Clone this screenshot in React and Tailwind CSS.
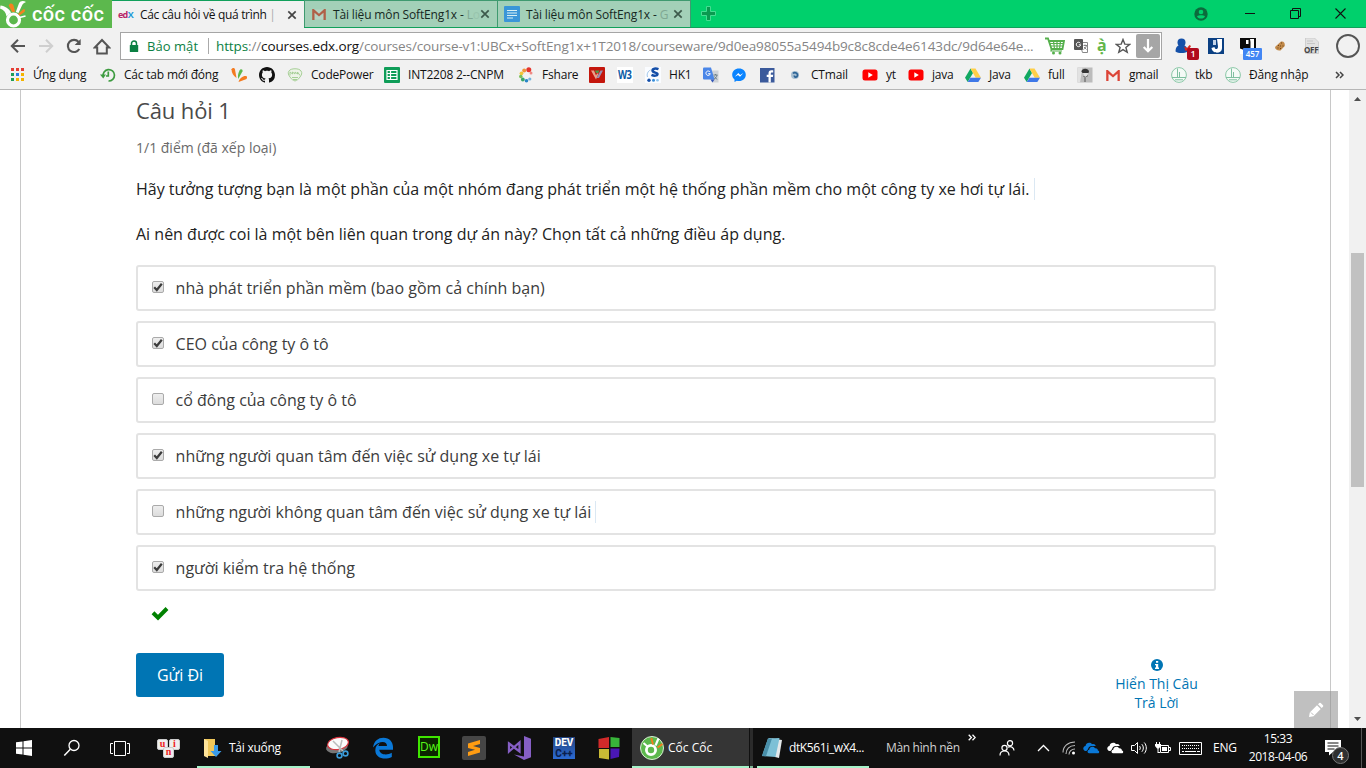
import React from "react";

const ui = "font-['Open_Sans','Noto_Sans',sans-serif]";

function Svg({ w = 16, h = 16, vb, children }) {
  return (
    <svg width={w} height={h} viewBox={vb || `0 0 ${w} ${h}`} className="block shrink-0" fill="none">
      {children}
    </svg>
  );
}

/* ---------- shared glyphs ---------- */

function CocCocMark() {
  return (
    <Svg w={28} h={28}>
      <circle cx="13.500" cy="20" r="6" stroke="#fff" strokeWidth="3.200" fill="#5cb84d" />
      <path d="M.5 5.500c4.500.5 8.500 3 10.500 7l-4.500 4C6 12.500 4 10 0 8.500z" fill="#fff" />
      <path d="M9.800 3.700c1.800-.9 3.500.2 3.800 2l1.500 6-3 .3L8.700 5.500z" fill="#f58220" />
      <path d="m15.800 12 3.200-8.800C20.200.800 23.500.5 26 2c-2 .8-3.500 2-4 3.500L18.500 13z" fill="#fff" />
      <path d="m18 14 5-4.500c.8-.6 2.100-.1 2 1-.1.900-.6 1.500-1.300 1.900L19.500 15.500z" fill="#f58220" />
      <path d="m19.500 17.500 6-1.500" stroke="#fff" strokeWidth="1.800" />
    </Svg>
  );
}

function Gmail({ faded }) {
  return (
    <Svg>
      <path d="M2 3.500h12v10H2z" fill={faded ? "#b5d3c3" : "#f4eeee"} />
      <path d="M1.200 14V3h1.600L8 7.800 13.200 3h1.600v11h-2.300V6.800L8 10.600 3.500 6.800V14z" fill={faded ? "#b06048" : "#dc4437"} />
    </Svg>
  );
}

function CloseX({ color = "#555" }) {
  return (
    <Svg w={10} h={10}>
      <path d="m1.300 1.300 7.400 7.400M8.700 1.300 1.300 8.700" stroke={color} strokeWidth="1.700" />
    </Svg>
  );
}

/* ---------- title bar ---------- */

function TitleBar() {
  return (
    <div className="flex h-7 border-b border-[#11a05b] bg-[#00d06c]">
      <div className="relative flex h-[28px] w-[112px] shrink-0 overflow-hidden bg-[#5cb84d]">
        <CocCocMark />
        <span className="ml-[4px] mt-[1px] whitespace-nowrap font-['Roboto','Open_Sans',sans-serif] text-[20px] font-medium leading-[26px] tracking-[0.400px] text-white">
          cốc cốc
        </span>
      </div>
      <div className="flex h-[28px] w-[192px] shrink-0 items-center border-t border-[#11a05b] bg-[#f1f1f1] pl-[6px]">
        <span className="w-[16px] font-['Open_Sans'] text-[9px] font-bold leading-3 tracking-[-0.700px] text-[#b72667]">
          ed<span className="text-[#1f9bd8]">X</span>
        </span>
        <span className="ml-[6px] w-[140px] whitespace-nowrap text-[12px] leading-5 tracking-[-0.310px] text-[#111]">
          Các câu hỏi về quá trình <span className="text-[#aaa]">|</span>
        </span>
        <span className="ml-[7px]"><CloseX color="#444" /></span>
      </div>
      <div className="flex h-[27px] w-[193px] shrink-0 items-center border-l border-t border-[#3f9a70] bg-[#a3d0b8] pl-[6px]">
        <Gmail faded />
        <span className="ml-[6px] mt-[1px] w-[147px] whitespace-nowrap text-[12px] leading-5 tracking-[-0.150px] text-[#16281f]">
          Tài liệu môn SoftEng1x - <span className="text-[#7fa893]">L</span><span className="text-[#98c4ad]">o</span>
        </span>
        <CloseX color="#3d5a4b" />
      </div>
      <div className="flex h-[27px] w-[194px] shrink-0 items-center border-x border-t border-[#3f9a70] bg-[#a3d0b8] pl-[6px]">
        <Svg>
          <rect width="16" height="16" rx="1" fill="#3a96d8" />
          <path d="M3 4.500h10M3 7h10M3 9.500h10M3 12h6" stroke="#d8f0f4" strokeWidth="1.100" />
        </Svg>
        <span className="ml-[6px] mt-[1px] w-[147px] whitespace-nowrap text-[12px] leading-5 tracking-[-0.150px] text-[#16281f]">
          Tài liệu môn SoftEng1x - <span className="text-[#7fa893]">G</span>
        </span>
        <CloseX color="#3d5a4b" />
      </div>
      <div className="flex flex-1 items-center pl-[10px]">
        <Svg w={15} h={15}>
          <path d="M5.500.500h4v5h5v4h-5v5h-4v-5h-5v-4h5z" fill="#0a9a50" stroke="#45dd92" strokeWidth="1" />
        </Svg>
      </div>
      <div className="flex w-[172px] shrink-0 items-center">
        <Svg w={14} h={14}>
          <circle cx="7" cy="7" r="6.700" fill="#0b6b3c" />
          <circle cx="7" cy="5" r="2.300" fill="#00d06c" />
          <path d="M3 9.200c2-1.200 6-1.200 8 0-.8 3.200-7.200 3.200-8 0" fill="#00d06c" />
        </Svg>
        <div className="ml-[37px]"><Svg w={10} h={11}><path d="M0 5.500h10" stroke="#111" /></Svg></div>
        <div className="ml-[35px]">
          <Svg w={11} h={11}><path d="M.5 2.500h8v8h-8zM2.500 2.500v-2h8v8h-2" stroke="#111" /></Svg>
        </div>
        <div className="ml-[34px]"><Svg w={11} h={11}><path d="m.5.500 10 10m0-10-10 10" stroke="#111" strokeWidth="1.100" /></Svg></div>
      </div>
    </div>
  );
}

/* ---------- address bar ---------- */

function Toolbar() {
  return (
    <div className="flex h-[34px] items-center pt-[2px]">
      <div className="flex w-[120px] shrink-0 items-center pl-[10px]">
        <Svg w={16}><path d="M15 8H2.500M8 1.800 1.800 8 8 14.200" stroke="#555" strokeWidth="2" /></Svg>
        <div className="ml-[12px]"><Svg w={16}><path d="M1 8h12.500M8 1.800 14.200 8 8 14.200" stroke="#cfcfcf" strokeWidth="2" /></Svg></div>
        <div className="ml-[12px]">
          <Svg w={16}>
            <path d="M13.300 11A6.100 6.100 0 1 1 12.600 3.900" stroke="#555" strokeWidth="2.100" />
            <path d="M14.700 1v6H8.700z" fill="#555" />
          </Svg>
        </div>
        <div className="ml-[11px]">
          <Svg w={18} h={17}><path d="M1.800 9.500 9 2l7.200 7.500h-2.400V15.500H4.200V9.500z" stroke="#555" strokeWidth="2" /></Svg>
        </div>
      </div>
      <div className="flex h-[28px] w-[1042px] shrink-0 items-center border border-[#a5a5a5] bg-white">
        <div className="ml-[8px]">
          <Svg w={10} h={13}>
            <rect x=".8" y="5" width="8.400" height="7" rx=".5" fill="#0b8043" />
            <path d="M2.500 5V3.500a2.500 2.500 0 0 1 5 0V5" stroke="#0b8043" strokeWidth="1.500" />
          </Svg>
        </div>
        <span className="ml-[8px] w-[61px] whitespace-nowrap text-[13px] leading-6 tracking-[0.050px] text-[#0b8043]">Bảo mật</span>
        <span className="h-[16px] w-px bg-[#aaa]" />
        <span className="ml-[7px] w-[829px] shrink-0 whitespace-nowrap text-[13.500px] leading-6 tracking-[-0.122px] text-[#858585]">
          <span className="text-[#0b8043]">https</span>://<span className="text-[#111]">courses.edx.org</span>
          /courses/course-v1:UBCx+SoftEng1x+1T2018/courseware/9d0ea98055a5494b9c8c8cde4e6143dc/9d64e64e...
        </span>
        <Svg w={20} h={18}>
          <path d="M0 1.500h3L6.500 12h11L19 4H4.500" stroke="#55b04c" strokeWidth="1.800" />
          <path d="M5 6.500h13M6 9h12M8.500 4l1 8M12 4v8M15.500 4l-1 8M6.500 12l-.5 2h11" stroke="#55b04c" strokeWidth="1.200" />
          <circle cx="8.500" cy="16" r="1.500" fill="#55b04c" /><circle cx="15" cy="16" r="1.500" fill="#55b04c" />
        </Svg>
        <div className="ml-[8px]">
          <Svg w={16}>
            <path d="M6.500 4.500h8v10h-5z" stroke="#888" fill="#fff" />
            <rect x="1" y="1" width="9" height="11" rx="1" fill="#555" />
            <path d="M7.400 5.300a2.200 2.200 0 1 0 .3 1.500H5.800" stroke="#fff" strokeWidth="1" />
            <path d="M10.500 7.500h3.500M12 6.500v1M13.500 7.500c-.5 2-1.500 3-3 4M11 9l2.500 2.500" stroke="#777" strokeWidth=".9" />
          </Svg>
        </div>
        <span className="ml-[8px] w-[10px] pb-[3px] font-['Noto_Sans',sans-serif] text-[16px] font-bold leading-5 text-[#62b64a]">ạ̀</span>
        <div className="ml-[8px]">
          <Svg w={16}><path d="m8 1.500 1.800 4.600 4.900.3-3.800 3.100 1.300 4.800L8 11.600l-4.200 2.700 1.300-4.800L1.300 6.400l4.900-.3z" stroke="#555" strokeWidth="1.400" /></Svg>
        </div>
        <div className="ml-[5px] flex h-[24px] w-[24px] shrink-0 items-center justify-center rounded-[2px] bg-[#a6a6a6]">
          <Svg w={14} h={16}><path d="M7 1v12M2.700 9 7 13.300 11.300 9" stroke="#fff" strokeWidth="2.200" /></Svg>
        </div>
      </div>
      <div className="ml-[13px] flex items-center">
        <div className="relative w-[33px]">
          <Svg w={18} h={18}>
            <circle cx="6.500" cy="5.500" r="4" fill="#1450a8" />
            <path d="M.5 14.500c0-5 3-7 6-7s6 2 6 7c-3 2-9 2-12 0" fill="#1450a8" />
            <path d="m9 9.500 3 1.500 2.500-3 1.500 1-2 3.500-3.500 1.500z" fill="#d5281e" />
          </Svg>
          <span className="absolute left-[12px] top-[11px] h-[12px] w-[12px] rounded-[2px] bg-[#b00b1e] text-center text-[9px] font-semibold leading-[12px] text-white">1</span>
        </div>
        <div className="w-[32px]">
          <Svg>
            <rect width="16" height="16" fill="#0b4083" />
            <path d="M9 1h5v9c0 6.500-10 6-10.500 0l3-1c.3 3 3.500 2.800 3.500-.5z" fill="#fff" />
            <path d="M5 2h3v5H5z" fill="#c3d3e8" />
          </Svg>
        </div>
        <div className="relative w-[34px]">
          <Svg>
            <rect width="16" height="16" fill="#0a0a0a" />
            <path d="M10 1h4v10h-3.500V4zM6 2h2.500v4H6zM0 10.500l4 1.500v4H0z" fill="#fff" />
          </Svg>
          <span className="absolute left-[3px] top-[10px] h-[12px] w-[19px] rounded-[1px] bg-[#4286f4] text-center text-[8px] font-semibold leading-[12px] text-white">457</span>
        </div>
        <div className="w-[30px]">
          <Svg w={12} h={12}>
            <path d="M1 7 7 1.500c3-.5 4 1.500 3.800 4.500L6.500 10.500C3.500 11 1 9.500 1 7" fill="#c28a4a" />
            <path d="M4 5.500h1M7 3h1M6 6h1M8.500 6h1M6 8.500h1M3.500 8h1" stroke="#6e431b" strokeWidth="1.100" />
          </Svg>
        </div>
        <div className="relative w-[32px]">
          <Svg>
            <path d="M1.500 0h9l4 4v11.500h-13z" fill="#e2e2e2" stroke="#c4c4c4" strokeWidth=".7" />
            <path d="M3 3h6M3 5.500h8M3 14.300h8" stroke="#c6c6c6" />
          </Svg>
          <span className="absolute left-0 top-[8px] text-[8px] font-bold leading-[8px] tracking-[-0.300px] text-[#444]">OFF</span>
        </div>
        <Svg w={24} h={24}><circle cx="12" cy="12" r="11" stroke="#555" strokeWidth="1.900" /></Svg>
      </div>
    </div>
  );
}

/* ---------- bookmarks ---------- */

const Youtube = () => (
  <Svg><rect x=".5" y="2.500" width="15" height="11" rx="2.500" fill="#f00" /><path d="m6.300 5.300 4.500 2.700-4.500 2.700z" fill="#fff" /></Svg>
);
const Drive = () => (
  <Svg>
    <path d="M5.500 1.500 0 10.700 2.700 15 8 6z" fill="#11a861" />
    <path d="M5.500 1.500h5L16 10.700h-5.300z" fill="#ffcf48" />
    <path d="M5.400 10.700H16L13.300 15H2.700z" fill="#3f78e8" />
  </Svg>
);
const Campus = () => (
  <Svg>
    <circle cx="8" cy="8" r="7.400" stroke="#8cc8a8" fill="#f4faf6" />
    <path d="M6.500 1.500v9M8.500 5v5.500M1 10.500h14M4 12.800h8" stroke="#7fc0a0" strokeWidth="1" />
  </Svg>
);

const GITHUB =
  "M8 0C3.580 0 0 3.580 0 8c0 3.540 2.290 6.530 5.470 7.590.4.070.55-.17.55-.38 0-.19-.01-.82-.01-1.490-2.010.37-2.530-.49-2.690-.94-.09-.23-.48-.94-.82-1.130-.28-.15-.68-.52-.01-.53.63-.01 1.080.58 1.230.82.72 1.210 1.870.87 2.330.66.070-.52.28-.87.51-1.070-1.780-.2-3.640-.89-3.640-3.950 0-.87.31-1.590.82-2.150-.08-.2-.36-1.020.08-2.120 0 0 .67-.21 2.200.82.64-.18 1.320-.27 2-.27s1.360.09 2 .27c1.530-1.040 2.200-.82 2.200-.82.44 1.100.16 1.920.08 2.120.51.56.82 1.270.82 2.150 0 3.070-1.870 3.750-3.650 3.950.29.25.54.73.54 1.480 0 1.070-.01 1.930-.01 2.200 0 .21.15.46.55.38A8.010 8.010 0 0 0 16 8c0-4.420-3.580-8-8-8";

const bookmarks = [
  {
    w: "w-[91px]", label: "Ứng dụng",
    icon: (
      <Svg>
        {["#e53e35", "#e53e35", "#e53e35", "#1f9e58", "#2a7de1", "#f4b400", "#1f9e58", "#f4b400", "#f4b400"].map((c, i) => (
          <rect key={i} x={2 + (i % 3) * 5} y={1 + Math.floor(i / 3) * 5} width="3" height="3" fill={c} />
        ))}
      </Svg>
    ),
  },
  {
    w: "w-[131px]", label: "Các tab mới đóng",
    icon: (
      <Svg>
        <path d="M3.200 9.500A5.700 5.700 0 1 1 8.500 14M8.300 4.500V9H6" stroke="#3d9b40" strokeWidth="1.700" />
        <path d="M0 7.500h6L3.200 11.500z" fill="#3d9b40" />
      </Svg>
    ),
  },
  {
    w: "w-[28px]",
    icon: (
      <Svg>
        <path d="M.5 2.200C1.500.5 3.500.8 4 2.500L5.500 11C2.500 9 .5 6 .5 2.200" fill="#f47b20" />
        <path d="M8.500 3.500c1-2 3.500-1.500 3 .7L7.300 12C6.500 9 7 6.500 8.500 3.500" fill="#5cb84d" />
        <path d="M14.500 9c2 0 2 2.500.5 3.200L7.500 15c1-3.500 4-6 7-6" fill="#f47b20" />
      </Svg>
    ),
  },
  { w: "w-[28px]", icon: <Svg><path d={GITHUB} fill="#111" /></Svg> },
  {
    w: "w-[97px]", label: "CodePower",
    icon: (
      <Svg>
        <path d="M2 4c1.500-3 10.500-3 12 0 1.500 2 .5 4-1 6-2 3-3 3-5 4-2-1-3-1-5-4C1.500 8 .5 6 2 4" stroke="#a6cf96" fill="#edf3e8" />
        <path d="M3 8.500V5l2.500 2V5l2.500 2V5l2.500 2V5L13 8.500M5 10.500h6M6 12.500h4" stroke="#a6cf96" />
      </Svg>
    ),
  },
  {
    w: "w-[134px]", label: "INT2208 2--CNPM",
    icon: (
      <Svg>
        <rect width="16" height="16" rx="1" fill="#0f9d58" />
        <path d="M3 3.500h10v9H3zM3 6.500h10M3 9.500h10M6.500 3.500v9" stroke="#fff" strokeWidth="1.200" />
      </Svg>
    ),
  },
  {
    w: "w-[71px]", label: "Fshare",
    icon: (
      <Svg>
        <circle cx="10.800" cy="2.800" r="2.500" fill="#e5352d" /><circle cx="6.200" cy="3.500" r="2" fill="#f0933a" />
        <circle cx="3.500" cy="6.300" r="1.900" fill="#f0c63a" /><circle cx="2.800" cy="9.500" r="1.800" fill="#7bbf5a" />
        <circle cx="4.800" cy="12.500" r="1.900" fill="#3aa66c" /><circle cx="8.500" cy="13.700" r="1.800" fill="#2a86c8" />
        <circle cx="11.800" cy="12" r="1.600" fill="#74b4dc" /><circle cx="13" cy="6" r="1.500" fill="#ef8a85" />
      </Svg>
    ),
  },
  {
    w: "w-[28px]",
    icon: (
      <Svg>
        <rect width="16" height="16" rx="1" fill="#c4160c" />
        <path d="M2 3.500h3l2 5 1-2h1.500L7 12.500z" fill="#e8a08a" />
        <path d="M6 3.500h4.500L9.300 6H7z" fill="#4f9a4a" /><path d="M11.500 3.500H14L10 11H7.500z" fill="#9a8fb0" />
      </Svg>
    ),
  },
  {
    w: "w-[28px]",
    icon: (
      <span className="flex h-4 w-4 shrink-0 items-center justify-center bg-white text-[12px] font-bold leading-4 tracking-[-0.500px] text-[#0b5ba5]">
        <span className="scale-x-[0.78]">W3</span>
      </span>
    ),
  },
  {
    w: "w-[58px]", label: "HK1",
    icon: (
      <Svg>
        <rect width="16" height="16" fill="#fafcff" />
        <path d="M13.500 2.200c-3-1.200-6-.6-6 1.400 0 2.500 5 1.500 5 3.500 0 1.800-3.500 2-6 .8" stroke="#154fa8" strokeWidth="2.500" />
        <path d="M5.500 3C3 4 1.500 7 2.500 10" stroke="#9cc4ea" />
        <circle cx="4" cy="13.300" r="1.700" fill="#154fa8" /><circle cx="8.500" cy="13.300" r="1.500" fill="#3a8fd8" /><circle cx="12.500" cy="13.300" r="1.300" fill="#8cc4ee" />
      </Svg>
    ),
  },
  {
    w: "w-[28px]",
    icon: (
      <Svg>
        <path d="M6 3.500h9.500V15.500H9z" fill="#cfd3d8" />
        <path d="M0 1.500Q0 .5 1 .5h7l3.500 12H1q-1 0-1-1z" fill="#4a86e8" /><path d="M7.500 12.500h4l-2 3z" fill="#3357b8" />
        <path d="M7 5a2.200 2.200 0 1 0 .3 1.700H5.200" stroke="#fff" strokeWidth="1" />
        <path d="M10.500 8h4M12.500 7v1M14 8c-.3 2-1.500 3.500-3 4M11.500 9.500l2.500 3" stroke="#6f8087" strokeWidth="1" />
      </Svg>
    ),
  },
  {
    w: "w-[29px]",
    icon: (
      <Svg>
        <path d="M8 1.500c-4 0-6.800 2.700-6.800 6.200 0 2 .9 3.600 2.300 4.700V15l2.300-1.300c.7.200 1.400.3 2.200.3 4 0 6.800-2.700 6.800-6.300S12 1.500 8 1.500" fill="#0a84ff" />
        <path d="m3.800 9.700 3.500-3.600 1.900 1.800 3.200-1.800L9 9.700 7 7.900z" fill="#fff" />
      </Svg>
    ),
  },
  {
    w: "w-[27px]",
    icon: (
      <Svg>
        <rect y="1" width="14.500" height="14.500" fill="#3b5a9b" />
        <path d="M8.500 15.500V10H6.700V7.700h1.800V6.200c0-2 1-3 3-3h1.700v2.200h-1.300c-.9 0-1.100.4-1.100 1.100v1.200h2.400L12.900 10h-2.100v5.500z" fill="#fff" />
      </Svg>
    ),
  },
  {
    w: "w-[75px]", label: "CTmail",
    icon: (
      <Svg>
        <circle cx="8" cy="8" r="4" fill="#a7bfd2" /><path d="M6 6.500c2-2 5 0 4.500 2S7 11 7.500 8.500" stroke="#2c6496" strokeWidth="1.700" />
      </Svg>
    ),
  },
  { w: "w-[46px]", label: "yt", icon: <Youtube /> },
  { w: "w-[57px]", label: "java", icon: <Youtube /> },
  { w: "w-[59px]", label: "Java", icon: <Drive /> },
  { w: "w-[53px]", label: "full", icon: <Drive /> },
  {
    w: "w-[28px]",
    icon: (
      <Svg>
        <rect x=".5" y=".5" width="15" height="15" fill="#bcbcbc" />
        <path d="M.5.500h5L3 15.500H.5z" fill="#e2e2e2" />
        <path d="M4.500 4.500c0-3.500 7-4 7.500 0l-.5 1.500h-6z" fill="#333" /><path d="M6 6h5L10 9H7.500z" fill="#dedede" />
        <path d="M6.500 9 8 10.500V15M10.500 8.500 9.500 10" stroke="#555" />
      </Svg>
    ),
  },
  { w: "w-[66px]", label: "gmail", icon: <Gmail /> },
  { w: "w-[54px]", label: "tkb", icon: <Campus /> },
  { w: "w-[110px]", label: "Đăng nhập", icon: <Campus /> },
];

function Bookmarks() {
  return (
    <div className="flex h-[28px] items-center border-b border-[#b6b6b6] pb-[1px] pl-[9px]">
      {bookmarks.map((b, i) => (
        <div key={i} className={`flex shrink-0 items-center gap-2 ${b.w}`}>
          {b.icon}
          {b.label && <span className="whitespace-nowrap text-[12px] leading-4 tracking-[-0.200px] text-[#111]">{b.label}</span>}
        </div>
      ))}
      <Svg w={9} h={8}><path d="m1 1 3 3-3 3m4-6 3 3-3 3" stroke="#444" strokeWidth="1.500" /></Svg>
    </div>
  );
}

/* ---------- course page ---------- */

const choices = [
  ["nhà phát triển phần mềm (bao gồm cả chính bạn)", true],
  ["CEO của công ty ô tô", true],
  ["cổ đông của công ty ô tô", false],
  ["những người quan tâm đến việc sử dụng xe tự lái", true],
  ["những người không quan tâm đến việc sử dụng xe tự lái", false, true],
  ["người kiểm tra hệ thống", true],
];

function Checkbox({ on }) {
  return (
    <span className="flex h-[12px] w-[12px] shrink-0 items-center justify-center rounded-[2px] border border-[#aaa] bg-linear-to-b from-[#eee] to-[#dcdcdc]">
      {on && <Svg w={10} h={10}><path d="M1.200 5.200 3.800 8 8.800 1.700" stroke="#3c3c3c" strokeWidth="2.200" /></Svg>}
    </span>
  );
}

function CoursePage() {
  return (
    <div className="flex h-[638px] bg-white">
      <main className="relative ml-[20px] w-[1311px] shrink-0 border-x border-[#c8c8c8] pl-[115px]">
        <h3 className="pt-[4px] text-[22px] leading-[32px] tracking-[-0.120px] text-[#4a4a4a]">Câu hỏi 1</h3>
        <p className="mt-[12px] text-[14px] leading-5 text-[#6a6a6a]">1/1 điểm (đã xếp loại)</p>
        <p className="mt-[19px] flex items-center text-[16px] leading-6 text-[#222]">
          Hãy tưởng tượng bạn là một phần của một nhóm đang phát triển một hệ thống phần mềm cho một công ty xe hơi tự lái.
          <span className="ml-[5px] h-[22px] w-px bg-[#dbe8f3]" />
        </p>
        <p className="mt-[21px] text-[16px] leading-6 text-[#222]">
          Ai nên được coi là một bên liên quan trong dự án này? Chọn tất cả những điều áp dụng.
        </p>
        <div className="mt-[19px] flex w-[1080px] flex-col gap-[10px]">
          {choices.map(([text, on, caret]) => (
            <label key={text} className="flex h-[46px] items-center rounded-[3px] border-2 border-[#e3e3e3] pl-[14px] text-[16px] leading-6 text-[#3c3c3c]">
              <span className="mt-[-3px]"><Checkbox on={on} /></span>
              <span className="ml-[11.600px]">{text}</span>
              {caret && <span className="ml-[4px] h-[22px] w-px bg-[#dbe8f3]" />}
            </label>
          ))}
        </div>
        <div className="ml-[15px] mt-[14px]">
          <Svg w={18} h={16}><path d="M2 7.800 7 12.700 16 3.500" stroke="#008100" strokeWidth="4" /></Svg>
        </div>
        <div className="mt-[32px] flex items-start">
          <button className="h-[44px] w-[88px] rounded-[3px] bg-[#0075b4] text-[16px] font-medium text-white">Gửi Đi</button>
          <div className="ml-[878px] flex w-[109px] flex-col items-center pt-[6px] text-center text-[14px] leading-[19px] text-[#0075b4]">
            <Svg w={12} h={12}>
              <circle cx="6" cy="6" r="6" fill="#0075b4" />
              <path d="M5 2h2.200v1.800H5zM4 5h3.200v3.600H8V10H4V8.600h1V6.300H4z" fill="#fff" />
            </Svg>
            <span className="mt-[3px]">Hiển Thị Câu<br />Trả Lời</span>
          </div>
        </div>
        <div className="absolute bottom-0 right-[-8px] flex h-[37px] w-[44px] items-center justify-center bg-[#8c8c8c]/55">
          <Svg w={16} h={16}>
            <path d="m1 15 .8-4.500L9 3.300 12.700 7 5.500 14.200zM10 2.300l1.300-1.300q.7-.6 1.400 0L15 3.300q.6.7 0 1.400L13.700 6z" fill="#fff" />
            <path d="m3 10.500 2.500 2.500" stroke="#bbb" />
          </Svg>
        </div>
      </main>
      <div className="flex-1" />
      <div className="flex w-[17px] flex-col items-center bg-[#f1f1f1]">
        <div className="mt-[7px]"><Svg w={7} h={4}><path d="M0 4h7L3.500 0z" fill="#505050" /></Svg></div>
        <div className="mt-[152px] h-[234px] w-[13px] bg-[#c1c1c1]" />
        <div className="mt-[230px]"><Svg w={7} h={4}><path d="M0 0h7L3.500 4z" fill="#505050" /></Svg></div>
      </div>
    </div>
  );
}

/* ---------- taskbar ---------- */

function Key({ children }) {
  return (
    <span className="flex h-[11px] w-[11px] items-center justify-center rounded-[2px] border border-[#ccc] bg-[#eee] pb-[2px] font-['Liberation_Serif',serif] text-[10px] font-bold leading-[9px] text-[#e22]">
      {children}
    </span>
  );
}

const Cloud = ({ color }) => (
  <Svg w={18} h={14}>
    <path d="M3.500 10C.5 9.500.5 5.500 3.500 5 4 1.500 8.500.8 10 3.300c1.500-.7 3.500 0 3.700 1.700H11C8 4.500 6 6.500 6 8.500 5 8.800 4.700 9.500 4.700 10z" fill={color} />
    <path d="M7 12.300C4.900 11.900 5.100 9 7.200 8.800 7.400 5.500 11.500 4.800 13 7.200c2-.3 3 1 2.900 2.200 1.900.3 1.600 2.900 0 2.900z" fill={color} />
  </Svg>
);

function Taskbar() {
  return (
    <div className="flex h-[40px] items-center bg-[#101010] text-[12px] text-white">
      <div className="flex w-[197px] shrink-0 items-center pl-[16px]">
        <Svg>
          <path d="M0 2.300 6.500 1.400v6.100H0zM7.500 1.300 16 0v7.500H7.500zM0 8.500h6.500v6.100L0 13.700zM7.500 8.500H16V16l-8.500-1.200z" fill="#fff" />
        </Svg>
        <div className="ml-[31px]">
          <Svg w={18} h={18}><circle cx="11" cy="6.500" r="5" stroke="#fff" strokeWidth="1.300" /><path d="M7.300 10.200 1.300 16.500" stroke="#fff" strokeWidth="1.500" /></Svg>
        </div>
        <div className="ml-[29px]">
          <Svg w={20} h={15}><path d="M4.500.5h11v14h-11zM3 2.500H.5v10H3M17 2.500h2.500v10H17" stroke="#fff" /></Svg>
        </div>
        <div className="ml-[27px] flex w-[23px] flex-wrap justify-center gap-x-px">
          <Key>u</Key><Key>i</Key><span className="mt-[-3px]"><Key>n</Key></span>
        </div>
      </div>
      <div className="flex h-[40px] w-[113px] shrink-0 items-center border-b-2 border-[#a6f2c9] pl-[6px] pt-[2px]">
        <Svg w={20} h={22}>
          <path d="M1 2h11v17H1z" fill="#f0c75a" /><path d="m1 2 4 2v17l-4-2z" fill="#ffe49a" />
          <path d="M11 8h4v6h3.500L13 20 7.500 14H11z" fill="#3b9be8" />
        </Svg>
        <span className="ml-[6px] whitespace-nowrap tracking-[-0.260px]">Tải xuống</span>
      </div>
      <div className="flex w-[322px] shrink-0 items-center pl-[15px]">
        <Svg w={24} h={24}>
          <ellipse cx="12" cy="11" rx="11" ry="6" transform="rotate(-12 12 11)" fill="#777" />
          <ellipse cx="13" cy="7.500" rx="10.500" ry="6" transform="rotate(-10 13 7.500)" fill="#fafafa" stroke="#d8323c" strokeWidth="1.200" />
          <path d="m8 5 10 10M17 4l-3 12" stroke="#bbb" strokeWidth="1.500" />
          <circle cx="14.500" cy="19.500" r="2.400" stroke="#3b9bd8" strokeWidth="1.600" /><circle cx="20.500" cy="17.500" r="2.400" stroke="#3b9bd8" strokeWidth="1.600" />
        </Svg>
        <div className="ml-[23px]">
          <Svg w={22} h={22}>
            <path d="M1 10.500C2 4 6 .7 11.500.7c6 0 9.500 4.300 9.500 9.300v2.700H7.300c.3 5 7.500 6 12.500 3v4.200c-7 3.500-16.500 1.300-16.500-6.700 0-3.500 2-6 4.700-7.200-1 1-1.300 2-1.500 3h8.500c0-5.500-8-5.500-14 1.500" fill="#0a78d7" />
          </Svg>
        </div>
        <div className="ml-[24px] mt-[-2px] flex h-[22px] w-[22px] items-center justify-center border-2 border-[#3fe600] bg-[#0b2400] font-['Open_Sans'] text-[12px] font-medium leading-none text-[#57f71a]">Dw</div>
        <div className="ml-[22px]">
          <Svg w={24} h={24}>
            <rect width="24" height="24" rx="2" fill="#464646" />
            <path d="m6 7.500 12-3.500v4l-7 2 7 2v4.500L6 20v-4l7-2.200L6 12z" fill="#ff9c12" />
          </Svg>
        </div>
        <div className="ml-[21px]">
          <Svg w={24} h={24}>
            <path d="m17 0 7 2.800v18.400L17 24 7 18.500l10 2z" fill="#865fc5" />
            <path d="M2 7.500 12.500 15.500V6.500L2 15.500z" stroke="#865fc5" strokeWidth="2.300" />
          </Svg>
        </div>
        <div className="ml-[22px] flex h-[22px] w-[22px] flex-col items-center justify-center bg-linear-to-b from-[#24437e] to-[#2b6bd4] font-['Roboto',sans-serif] text-[10px] font-extrabold leading-[11px]">
          <span>DEV</span><span className="text-[#0a1f4e]">C++</span>
        </div>
        <div className="ml-[23px]">
          <Svg w={22} h={24}>
            <path d="m.5 3 10.500-2v11H.5z" fill="#d22a2a" /><path d="M12.500 1 21.500 2v9h-9z" fill="#38b53a" />
            <path d="M1 13h10v10.500L1 22z" fill="#c9ba35" /><path d="M12.500 12.500H21.500L21 21l-8.500 2z" fill="#4a17b5" />
          </Svg>
        </div>
      </div>
      <div className="flex h-[40px] w-[117px] shrink-0 items-center border-b-2 border-[#a6f2c9] bg-[#353535] pl-[8px] pt-[1px]">
        <Svg w={24} h={24}>
          <circle cx="12" cy="12" r="11.500" fill="#5cb84d" stroke="#d8efd4" />
          <circle cx="11" cy="14" r="4.600" stroke="#fff" strokeWidth="2.800" />
          <path d="m3.500 7 4 3.500" stroke="#fff" strokeWidth="2" />
          <path d="m11.300 2 1.700 6.500" stroke="#f47b20" strokeWidth="1.900" /><path d="m18.500 2.500-3 7" stroke="#fff" strokeWidth="2.200" />
          <path d="m22.500 8-5 3.500" stroke="#f47b20" strokeWidth="2" />
        </Svg>
        <span className="ml-[4px] whitespace-nowrap">Cốc Cốc</span>
      </div>
      <div className="ml-px h-[40px] w-[3px] shrink-0 border-b-2 border-[#7fb898] bg-[#2b2b2b]" />
      <div className="ml-[4px] flex h-[40px] w-[112px] shrink-0 items-center border-b-2 border-[#a6f2c9] pl-[4px] pt-[1px]">
        <Svg w={22} h={22}>
          <path d="M8 1 21 3l-3 18L14 20z" fill="#e3e8ea" />
          <path d="M7 1.500 18.500 1 14.500 20 1 19z" fill="#7cc0d6" /><path d="M1 19 7 1.500l4 0L5 19.300z" fill="#498fa9" />
        </Svg>
        <span className="ml-[6px] whitespace-nowrap tracking-[-0.380px]">dtK561i_wX4...</span>
      </div>
      <span className="ml-[17px] w-[82px] shrink-0 whitespace-nowrap tracking-[-0.330px] text-[#d2d2d2]">Màn hình nền</span>
      <div className="mb-[21px]"><Svg w={8} h={7}><path d="m.7.800 2.700 2.700L.7 6.200M4.500.800l2.700 2.700-2.700 2.700" stroke="#fff" strokeWidth="1.300" /></Svg></div>
      <div className="ml-[23px]">
        <Svg w={16} h={16}>
          <circle cx="5.500" cy="8" r="2.600" stroke="#fff" strokeWidth="1.200" /><path d="M1 15.500c0-6 9-6 9 0" stroke="#fff" strokeWidth="1.200" />
          <circle cx="11" cy="3.300" r="2.600" stroke="#fff" strokeWidth="1.200" /><path d="M9 7.200c3-1.500 6 .3 6 3.300" stroke="#fff" strokeWidth="1.200" />
        </Svg>
      </div>
      <div className="ml-[22px]"><Svg w={13} h={8}><path d="m1 7 5.500-5.500L12 7" stroke="#fff" strokeWidth="1.300" /></Svg></div>
      <div className="ml-[12px]">
        <Svg w={14} h={14}>
          <path d="M1 11.500C1 5 6 1 13 1M4 13C4 8 7.500 4.500 13 4.500M7 13.500C7 10.500 9.500 8 13 8" stroke="#bbb" strokeWidth="1.100" />
          <circle cx="11.500" cy="12" r="1.500" fill="#fff" />
        </Svg>
      </div>
      <div className="ml-[6px]"><Cloud color="#0a78d7" /></div>
      <div className="ml-[6px]"><Cloud color="#fff" /></div>
      <div className="ml-[7px]">
        <Svg w={17} h={14}>
          <path d="M.5 4.500h3l3-3v11l-3-3h-3z" stroke="#fff" />
          <path d="M8.500 5c1 1 1 3 0 4M10.800 3.200c2 2 2 5.600 0 7.600M13.200 1.500c2.800 2.800 2.800 8.200 0 11" stroke="#fff" />
        </Svg>
      </div>
      <div className="ml-[7px]">
        <Svg w={16} h={12}>
          <path d="M5.500 3.500h8v7h-8zM14 5.500h1.500v3H14" stroke="#fff" /><path d="M7 5h5v4H7z" fill="#fff" />
          <path d="M1.500 0v2M4.500 0v2M3 6v5M3 10.500h2" stroke="#fff" /><path d="M0 2h6v2L4 6.500H2L0 4z" fill="#fff" />
        </Svg>
      </div>
      <div className="ml-[8px]">
        <Svg w={23} h={13}>
          <path d="M.5.500h22v12H.5z" stroke="#fff" />
          <path d="M3 3.500h18M3 6.500h18" stroke="#fff" strokeDasharray="1 1" /><path d="M3 9.500h2m1 0h11m1 0h3" stroke="#fff" />
        </Svg>
      </div>
      <span className="ml-[11px] w-[23px] whitespace-nowrap tracking-[-0.200px]">ENG</span>
      <div className="ml-[9px] flex w-[66px] flex-col items-center whitespace-nowrap leading-[18px] tracking-[-0.400px]">
        <span>15:33</span><span>2018-04-06</span>
      </div>
      <div className="relative ml-[14px] h-[24px] w-[26px] shrink-0">
        <div className="pt-[2px]">
          <Svg w={18} h={18}>
            <path d="M0 2h16v12H8l-4 3.500V14H0z" fill="#fff" /><path d="M2.500 5h11M2.500 8h11M2.500 11h7" stroke="#101010" />
          </Svg>
        </div>
        <span className="absolute left-[7px] top-[11px] flex h-[17px] w-[17px] items-center justify-center rounded-full border border-[#777] bg-[#303030] text-[11px] font-semibold leading-none">4</span>
      </div>
      <span className="ml-[10px] h-[40px] w-px bg-[#555]" />
    </div>
  );
}

export default function App() {
  return (
    <div className={`flex h-[768px] w-[1366px] flex-col overflow-hidden bg-[#f1f1f1] ${ui}`}>
      <TitleBar />
      <Toolbar />
      <Bookmarks />
      <CoursePage />
      <Taskbar />
    </div>
  );
}
